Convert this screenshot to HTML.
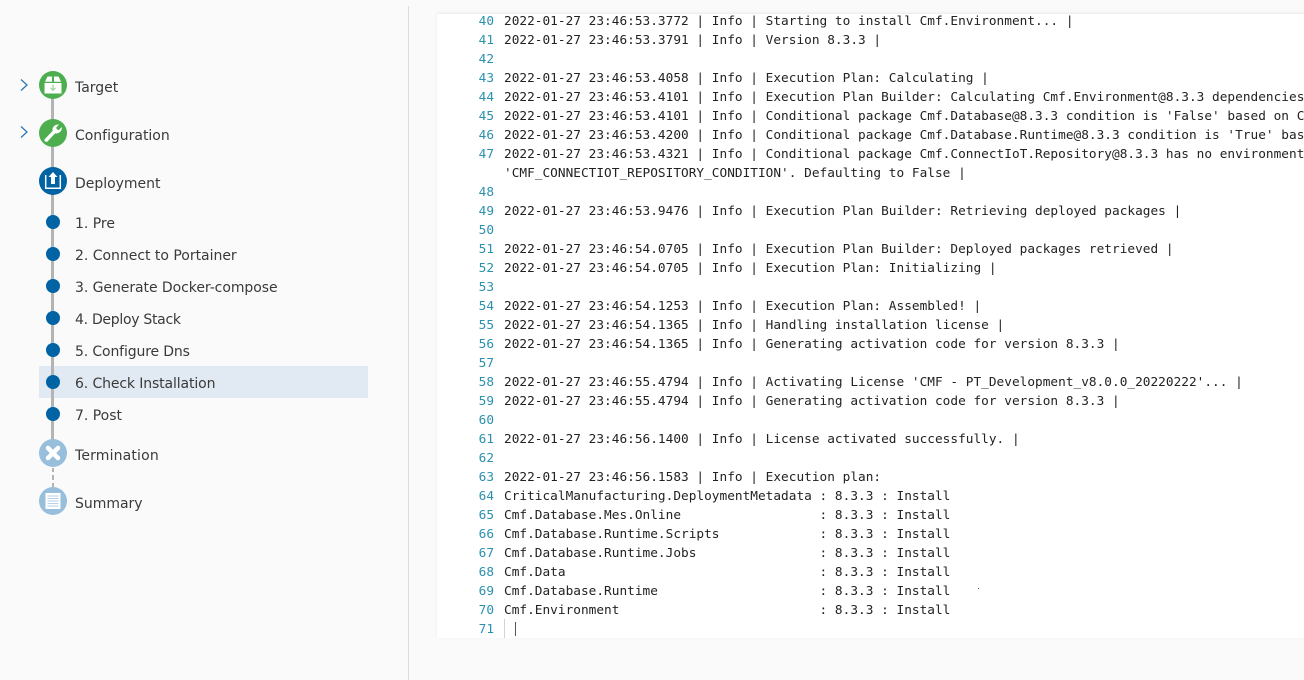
<!DOCTYPE html>
<html>
<head>
<meta charset="utf-8">
<style>
html,body{margin:0;padding:0;width:1304px;height:680px;overflow:hidden;background:#fafafa}
body{position:relative;font-family:"DejaVu Sans","Liberation Sans",sans-serif;color:#333}
.divider{position:absolute;left:408px;top:6px;width:1px;height:674px;background:#dcdcdc}
.editor{position:absolute;left:437px;top:14px;width:867px;height:624px;background:#fff;box-shadow:0 -1px 3px rgba(0,0,0,.07);overflow:hidden}
.n{position:absolute;left:0;width:57px;margin-top:1px;text-align:right;font:12.75px/19px "DejaVu Sans Mono","Liberation Mono",monospace;color:#2b91af;white-space:pre}
.t{position:absolute;left:67px;margin-top:1px;font:12.75px/19px "DejaVu Sans Mono","Liberation Mono",monospace;color:#222;white-space:pre;letter-spacing:.02px}
.line{position:absolute;left:53px;width:3px;background:#b4b4b4;margin-left:-2px}
.dash{position:absolute;left:52px;width:2px;background:#b4b4b4}
.c{position:absolute;left:39px;width:28px;height:28px;border-radius:50%}
.c svg{position:absolute;left:0;top:0}
.d{position:absolute;left:46px;width:14px;height:14px;border-radius:50%;background:#0063a3}
.l{position:absolute;left:75px;margin-top:1px;font-family:"DejaVu Sans",sans-serif;font-size:14px;line-height:20px;color:#3a3a3a;white-space:nowrap;letter-spacing:-.02px}
.sel{position:absolute;left:39px;top:366px;width:329px;height:32px;background:#e1e9f2}
.ch{position:absolute;left:19px}
</style>
</head>
<body>
<div class="divider"></div>
<div class="sel"></div>

<div class="line" style="top:95px;height:358px"></div>
<div class="dash" style="top:468px;height:4px"></div>
<div class="dash" style="top:475px;height:5px"></div>
<div class="dash" style="top:483px;height:5px"></div>

<svg class="ch" style="top:78px" width="10" height="14" viewBox="0 0 10 14"><path d="M2 1.5L8 7L2 12.5" fill="none" stroke="#2b78b8" stroke-width="1.3"/></svg>
<svg class="ch" style="top:125px" width="10" height="14" viewBox="0 0 10 14"><path d="M2 1.5L8 7L2 12.5" fill="none" stroke="#2b78b8" stroke-width="1.3"/></svg>

<div class="c" style="top:71px;background:#4cae4f"><svg width="28" height="28" viewBox="0 0 28 28">
<path d="M8.500 5.500H13V10.800H6Z M15 5.500H19.500L22 10.800H15Z" fill="#fff"/>
<rect x="5.500" y="12" width="17" height="10.500" fill="#fff"/>
<path d="M14 13.500V19M11.500 16.800L14 19.300L16.500 16.800" fill="none" stroke="#9ed49f" stroke-width="1.300"/>
</svg></div>

<div class="c" style="top:119px;background:#4cae4f"><svg width="28" height="28" viewBox="0 0 28 28">
<path d="M7.500 21.800L15.500 13.500C14.700 10.500 16.800 7.300 20.800 7.300L18.300 10.200L19.300 12.300L21.500 12.800L24 10.200C24 14 20.800 16.300 17.500 15.500L9.800 23.800C8.300 24.800 6.300 23.200 7.500 21.800Z" fill="#fff" stroke="#fff" stroke-width=".6" transform="translate(-1.500 -1.500)"/>
</svg></div>

<div class="c" style="top:167px;background:#0063a3"><svg width="28" height="28" viewBox="0 0 28 28">
<path d="M6.700 8V21.300H21.300V8" fill="none" stroke="#fff" stroke-width="1.500"/>
<path d="M14 5L18.500 10H16V17H12V10H9.500Z" fill="#fff"/>
</svg></div>

<div class="d" style="top:215px"></div>
<div class="d" style="top:247px"></div>
<div class="d" style="top:279px"></div>
<div class="d" style="top:311px"></div>
<div class="d" style="top:343px"></div>
<div class="d" style="top:375px"></div>
<div class="d" style="top:407px"></div>

<div class="c" style="top:439px;background:#97bedb"><svg width="28" height="28" viewBox="0 0 28 28">
<path d="M9 9L19 19M19 9L9 19" stroke="#fff" stroke-width="4.500" stroke-linecap="round"/>
</svg></div>

<div class="c" style="top:487px;background:#97bedb"><svg width="28" height="28" viewBox="0 0 28 28">
<rect x="6.500" y="6" width="15" height="16" fill="#fff"/>
<path d="M8.500 9H19.500M8.500 11.500H19.500M8.500 14H19.500M8.500 16.500H19.500M8.500 19H19.500" stroke="#b5d2e8" stroke-width="1"/>
</svg></div>

<div class="l" style="top:77px">Target</div>
<div class="l" style="top:125px">Configuration</div>
<div class="l" style="top:173px">Deployment</div>
<div class="l" style="top:213px">1. Pre</div>
<div class="l" style="top:245px">2. Connect to Portainer</div>
<div class="l" style="top:277px;letter-spacing:-.06px">3. Generate Docker-compose</div>
<div class="l" style="top:309px;letter-spacing:-.29px">4. Deploy Stack</div>
<div class="l" style="top:341px;letter-spacing:-.14px">5. Configure Dns</div>
<div class="l" style="top:373px;letter-spacing:-.12px">6. Check Installation</div>
<div class="l" style="top:405px">7. Post</div>
<div class="l" style="top:445px;letter-spacing:.16px">Termination</div>
<div class="l" style="top:493px">Summary</div>

<div class="editor">
<div class="n" style="top:-3px">40</div><div class="t" style="top:-3px">2022-01-27 23:46:53.3772 | Info | Starting to install Cmf.Environment... |</div>
<div class="n" style="top:16px">41</div><div class="t" style="top:16px">2022-01-27 23:46:53.3791 | Info | Version 8.3.3 |</div>
<div class="n" style="top:35px">42</div>
<div class="n" style="top:54px">43</div><div class="t" style="top:54px">2022-01-27 23:46:53.4058 | Info | Execution Plan: Calculating |</div>
<div class="n" style="top:73px">44</div><div class="t" style="top:73px">2022-01-27 23:46:53.4101 | Info | Execution Plan Builder: Calculating Cmf.Environment@8.3.3 dependencies</div>
<div class="n" style="top:92px">45</div><div class="t" style="top:92px">2022-01-27 23:46:53.4101 | Info | Conditional package Cmf.Database@8.3.3 condition is 'False' based on C</div>
<div class="n" style="top:111px">46</div><div class="t" style="top:111px">2022-01-27 23:46:53.4200 | Info | Conditional package Cmf.Database.Runtime@8.3.3 condition is 'True' bas</div>
<div class="n" style="top:130px">47</div><div class="t" style="top:130px">2022-01-27 23:46:53.4321 | Info | Conditional package Cmf.ConnectIoT.Repository@8.3.3 has no environment</div>
<div class="t" style="top:149px">'CMF_CONNECTIOT_REPOSITORY_CONDITION'. Defaulting to False |</div>
<div class="n" style="top:168px">48</div>
<div class="n" style="top:187px">49</div><div class="t" style="top:187px">2022-01-27 23:46:53.9476 | Info | Execution Plan Builder: Retrieving deployed packages |</div>
<div class="n" style="top:206px">50</div>
<div class="n" style="top:225px">51</div><div class="t" style="top:225px">2022-01-27 23:46:54.0705 | Info | Execution Plan Builder: Deployed packages retrieved |</div>
<div class="n" style="top:244px">52</div><div class="t" style="top:244px">2022-01-27 23:46:54.0705 | Info | Execution Plan: Initializing |</div>
<div class="n" style="top:263px">53</div>
<div class="n" style="top:282px">54</div><div class="t" style="top:282px">2022-01-27 23:46:54.1253 | Info | Execution Plan: Assembled! |</div>
<div class="n" style="top:301px">55</div><div class="t" style="top:301px">2022-01-27 23:46:54.1365 | Info | Handling installation license |</div>
<div class="n" style="top:320px">56</div><div class="t" style="top:320px">2022-01-27 23:46:54.1365 | Info | Generating activation code for version 8.3.3 |</div>
<div class="n" style="top:339px">57</div>
<div class="n" style="top:358px">58</div><div class="t" style="top:358px">2022-01-27 23:46:55.4794 | Info | Activating License 'CMF - PT_Development_v8.0.0_20220222'... |</div>
<div class="n" style="top:377px">59</div><div class="t" style="top:377px">2022-01-27 23:46:55.4794 | Info | Generating activation code for version 8.3.3 |</div>
<div class="n" style="top:396px">60</div>
<div class="n" style="top:415px">61</div><div class="t" style="top:415px">2022-01-27 23:46:56.1400 | Info | License activated successfully. |</div>
<div class="n" style="top:434px">62</div>
<div class="n" style="top:453px">63</div><div class="t" style="top:453px">2022-01-27 23:46:56.1583 | Info | Execution plan:</div>
<div class="n" style="top:472px">64</div><div class="t" style="top:472px">CriticalManufacturing.DeploymentMetadata : 8.3.3 : Install</div>
<div class="n" style="top:491px">65</div><div class="t" style="top:491px">Cmf.Database.Mes.Online                  : 8.3.3 : Install</div>
<div class="n" style="top:510px">66</div><div class="t" style="top:510px">Cmf.Database.Runtime.Scripts             : 8.3.3 : Install</div>
<div class="n" style="top:529px">67</div><div class="t" style="top:529px">Cmf.Database.Runtime.Jobs                : 8.3.3 : Install</div>
<div class="n" style="top:548px">68</div><div class="t" style="top:548px">Cmf.Data                                 : 8.3.3 : Install</div>
<div class="n" style="top:567px">69</div><div class="t" style="top:567px">Cmf.Database.Runtime                     : 8.3.3 : Install</div>
<div class="n" style="top:586px">70</div><div class="t" style="top:586px">Cmf.Environment                          : 8.3.3 : Install</div>
<div class="n" style="top:605px">71</div>
<div style="position:absolute;left:67px;top:605px;width:1px;height:19px;background:#d3d3d3"></div>
<div style="position:absolute;left:78px;top:608px;width:1px;height:14px;background:#555"></div>
<div style="position:absolute;left:541px;top:574px;width:1px;height:1px;background:#a04050"></div>
</div>
</body>
</html>
